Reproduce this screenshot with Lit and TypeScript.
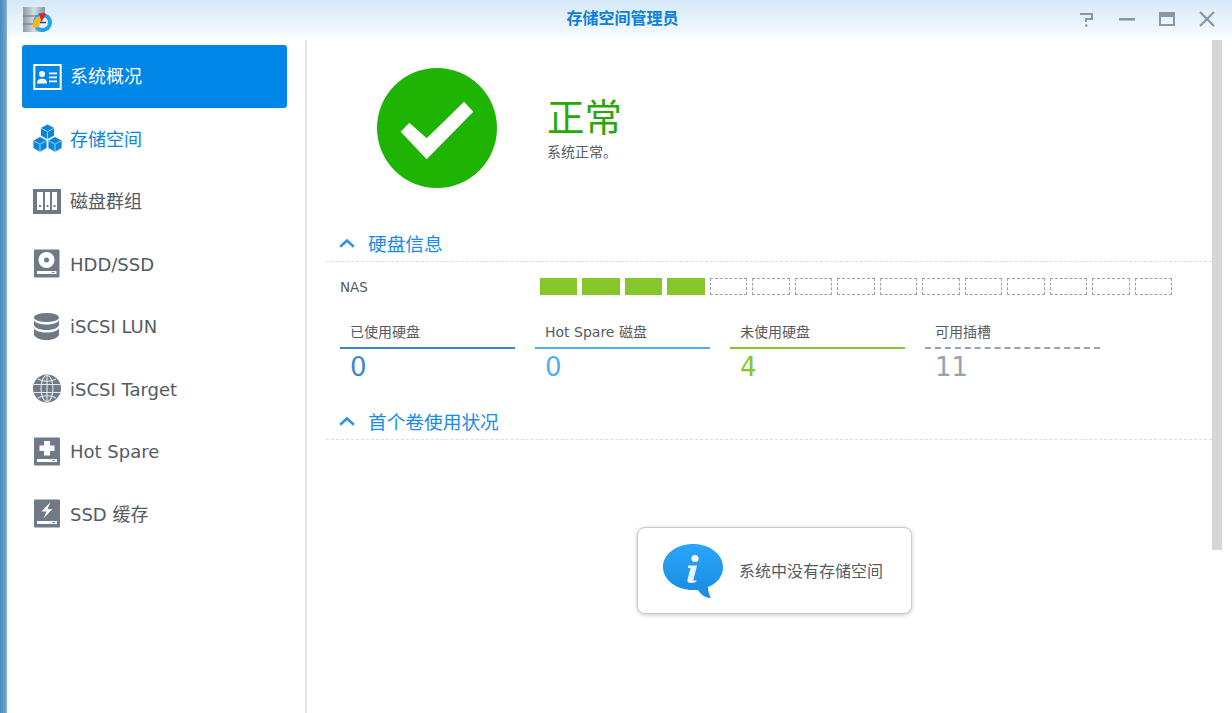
import { LitElement, html, css, svg } from 'lit';
import { customElement } from 'lit/decorators.js';

const GREY = '#6f7a86';
const BLUE = '#0a84e0';

const cube = (x: number, y: number) => svg`
  <path d="M${x} ${y}l6.600 3.600v7.400l-6.600 3.700-6.600-3.700v-7.400z" fill=${BLUE}/>
  <path d="M${x - 6.6} ${y + 3.6}l6.600 3.600 6.600-3.600M${x} ${y + 7.2}v7.500" fill="none" stroke="#9fd0f5" stroke-width="1"/>`;

const icons: Record<string, unknown> = {
  overview: svg`
    <rect x="2.300" y="3" width="26.400" height="24" fill="#0086e6" stroke="#fff" stroke-width="2"/>
    <circle cx="10" cy="12" r="3" fill="#fff"/>
    <path d="M5 21.500c0-3.400 2.200-4.800 5-4.800s5 1.400 5 4.800z" fill="#fff"/>
    <path d="M17 10.500h8v1.800h-8zM17 14.500h8v1.800h-8zM17 18.500h8v1.800h-8z" fill="#fff"/>`,
  storage: svg`${cube(15.5, 0.5)}${cube(8, 13)}${cube(23, 13)}`,
  volume: svg`
    <rect x="1" y="2" width="28" height="25" fill=${GREY}/>
    <path d="M5 5h6v18H5zM13 5h5v18h-5zM20 5h5v18h-5z" fill="#fff"/>
    <path d="M7 18h2v2H7zM14.500 18h2v2h-2zM21.500 18h2v2h-2z" fill=${GREY}/>`,
  hdd: svg`
    <rect x="2" y="0.500" width="25.500" height="28" rx="1" fill=${GREY}/>
    <circle cx="14.500" cy="11" r="8" fill="#fff"/>
    <circle cx="14.500" cy="11" r="2.500" fill=${GREY}/>
    <rect x="5" y="22" width="19.500" height="3" fill="#fff"/>
    <rect x="20" y="23" width="2.500" height="1" fill=${GREY}/>`,
  lun: svg`
    <ellipse cx="14.500" cy="5.500" rx="12.500" ry="4.500" fill=${GREY}/>
    <path d="M2 8.500c2 2.800 6.500 4 12.500 4s10.500-1.200 12.500-4v5c-2 3-6.500 4.500-12.500 4.500S4 16.500 2 13.500z" fill=${GREY}/>
    <path d="M2 16.500c2 2.800 6.500 4 12.500 4s10.500-1.200 12.500-4v6.500c-1.500 3-6.500 5-12.500 5S3.500 26 2 23z" fill=${GREY}/>`,
  target: svg`
    <circle cx="15" cy="14.500" r="14" fill=${GREY}/>
    <g fill="none" stroke="#e4e7ea" stroke-width="1.100">
      <ellipse cx="15" cy="14.500" rx="6" ry="13"/>
      <path d="M15 1.500v26M2 10.500h26M2 18.500h26"/>
      <path d="M6 5c5 3 13 3 18 0M6 24c5-3 13-3 18 0"/>
    </g>`,
  spare: svg`
    <rect x="2" y="0.500" width="26" height="28" rx="1" fill=${GREY}/>
    <path d="M12 4h6v4.500h4.500v5.500H18v4.500h-6V14H7.500V8.500H12z" fill="#fff"/>
    <rect x="5" y="22" width="20" height="3" fill="#fff"/>
    <rect x="20.500" y="23" width="2.500" height="1" fill=${GREY}/>`,
  ssd: svg`
    <rect x="2" y="0.500" width="26" height="28" rx="1" fill=${GREY}/>
    <path d="M18.500 3 9.500 12.500h5l-3 7 9-9.500h-5l3-7z" fill="#fff"/>
    <rect x="5" y="22" width="20" height="3" fill="#fff"/>
    <rect x="20.500" y="23" width="2.500" height="1" fill=${GREY}/>`,
};

const menu = [
  { icon: 'overview', label: '系统概况', cls: 'active' },
  { icon: 'storage', label: '存储空间', cls: 'link' },
  { icon: 'volume', label: '磁盘群组', cls: '' },
  { icon: 'hdd', label: 'HDD/SSD', cls: '' },
  { icon: 'lun', label: 'iSCSI LUN', cls: '' },
  { icon: 'target', label: 'iSCSI Target', cls: '' },
  { icon: 'spare', label: 'Hot Spare', cls: '' },
  { icon: 'ssd', label: 'SSD 缓存', cls: '' },
];

const stats = [
  { label: '已使用硬盘', value: '0', cls: 'used' },
  { label: 'Hot Spare 磁盘', value: '0', cls: 'spare' },
  { label: '未使用硬盘', value: '4', cls: 'free' },
  { label: '可用插槽', value: '11', cls: 'slot' },
];

const slots = Array.from({ length: 15 }, (_, i) => i < 4);

const chevron = html`<svg class="chevron" width="16" height="10" viewBox="0 0 16 10">
  <path d="M1.200 8.800 8 2.500l6.800 6.300" fill="none" stroke="#2b95e6" stroke-width="2.600"/>
</svg>`;

@customElement('app-root')
export class AppRoot extends LitElement {
  static styles = css`
    :host {
      display: flex;
      width: 1232px;
      height: 713px;
      overflow: hidden;
      background: #fff;
      font-family: 'DejaVu Sans', 'Noto Sans CJK SC', sans-serif;
      color: #555b63;
    }

    .edge {
      width: 7px;
      flex: none;
      background: linear-gradient(90deg, #4a8ab8, #6aa5cf 80%, #8fbcdc);
    }

    .window {
      flex: 1;
      display: flex;
      flex-direction: column;
      min-width: 0;
    }

    .titlebar {
      height: 40px;
      flex: none;
      display: grid;
      grid-template-columns: 1fr auto 1fr;
      align-items: center;
      background: linear-gradient(180deg, #d5e8f8, #f2f8fd 80%, #fff);
    }

    .logo {
      margin: -1px 0 0 15px;
      display: block;
    }

    .title {
      font-size: 16px;
      line-height: 20px;
      font-weight: 700;
      color: #0a80dc;
      padding: 0 0 3px 6px;
    }

    .controls {
      display: flex;
      justify-content: flex-end;
      gap: 24px;
      padding: 0 17px 2px 0;
    }

    .body {
      flex: 1;
      display: flex;
      min-height: 0;
    }

    .sidebar {
      width: 300px;
      flex: none;
      box-sizing: border-box;
      padding: 5px 18px 0 15px;
      border-right: 2px solid #e6e7e8;
    }

    .item {
      height: 62.5px;
      display: flex;
      align-items: center;
      gap: 8px;
      padding-left: 10px;
      border-radius: 3px;
      font-size: 18px;
      line-height: 24px;
    }

    .item span {
      padding-top: 2px;
    }

    .item svg {
      flex: none;
    }

    .item.active {
      background: #0086e6;
      color: #fff;
    }

    .item.link {
      color: #0a84e0;
    }

    .main {
      position: relative;
      flex: 1;
      min-width: 0;
      padding: 0 10px 0 19px;
    }

    .scrollbar {
      position: absolute;
      top: 0;
      right: 10px;
      width: 10px;
      height: 510px;
      background: #d5d6d8;
    }

    .status {
      display: flex;
      align-items: flex-start;
      gap: 50px;
      padding: 28px 0 0 51px;
      height: 120px;
    }

    .status-text {
      padding-top: 26px;
    }

    .status-title {
      font-size: 37.5px;
      line-height: 48px;
      color: #28a806;
    }

    .status-desc {
      font-size: 14px;
      line-height: 20px;
    }

    .head {
      box-sizing: border-box;
      height: 37px;
      display: flex;
      align-items: center;
      gap: 13px;
      padding-left: 13px;
      border-bottom: 1px dashed #d3deea;
      font-size: 18.7px;
      color: #1a8ae6;
    }

    .head span {
      position: relative;
      top: -1px;
    }

    .disk {
      margin-top: 37px;
    }

    .nas {
      display: flex;
      align-items: center;
      margin-top: 16px;
      padding-left: 14px;
      font-size: 13.5px;
    }

    .nas-label {
      width: 200px;
      flex: none;
    }

    .slots {
      width: 632px;
      display: grid;
      grid-template-columns: repeat(15, 1fr);
      gap: 5px;
    }

    .bay {
      box-sizing: border-box;
      height: 17px;
      border: 1px dashed #9aa2ad;
    }

    .bay.on {
      background: #85c62a;
      border: none;
    }

    .stats {
      display: flex;
      gap: 20px;
      margin-top: 27px;
      padding-left: 14px;
    }

    .stat {
      width: 175px;
    }

    .stat-label {
      box-sizing: border-box;
      height: 27px;
      line-height: 20px;
      padding-left: 10px;
      font-size: 14px;
      border-bottom: 2px solid;
    }

    .stat-value {
      padding-left: 10px;
      font-size: 26px;
      line-height: 36px;
    }

    .used .stat-label { border-color: #3f87cc; }
    .used .stat-value { color: #3f87cc; }
    .spare .stat-label { border-color: #4fb0f0; }
    .spare .stat-value { color: #4fb0f0; }
    .free .stat-label { border-color: #85c62a; }
    .free .stat-value { color: #85c62a; }
    .slot .stat-label { border-bottom: 2px dashed #9aa2ad; }
    .slot .stat-value { color: #97a3b3; }

    .usage {
      margin-top: 18px;
    }

    .notice {
      box-sizing: border-box;
      width: 275px;
      height: 87px;
      margin: 87px 0 0 311px;
      display: flex;
      align-items: center;
      gap: 16px;
      padding-left: 25px;
      background: #fff;
      border: 1px solid #c6cbd1;
      border-radius: 8px;
      box-shadow: 0 1px 4px rgba(0, 0, 0, 0.22);
      font-size: 16px;
    }

    .notice span {
      position: relative;
      top: -1px;
    }
  `;

  render() {
    return html`
      <div class="edge"></div>
      <div class="window">
        <div class="titlebar">
          <svg class="logo" width="31" height="29" viewBox="0 0 31 29">
            <defs>
              <linearGradient id="can" x1="0" y1="0" x2="1" y2="0">
                <stop offset="0" stop-color="#8e9aa6"/>
                <stop offset="0.5" stop-color="#d3dbe2"/>
                <stop offset="1" stop-color="#8593a0"/>
              </linearGradient>
            </defs>
            <rect x="1" y="2" width="22" height="25" fill="url(#can)"/>
            <path d="M1 11h22M1 19h22" stroke="#66727e" stroke-width="1"/>
            <circle cx="20.500" cy="17.500" r="9.500" fill="#1ea4f6"/>
            <circle cx="20.500" cy="17.500" r="5.500" fill="#e8f3fb"/>
            <path d="M10.500 22c0-6 3-10 7-11l2 6-4 6z" fill="#f5b81c"/>
            <path d="M17 8.500l6-.5 .5 2-4 7z" fill="#e0202c"/>
            <path d="M18 17.500h6" stroke="#33506b" stroke-width="1.500"/>
          </svg>
          <div class="title">存储空间管理员</div>
          <div class="controls">
            <svg width="16" height="16" viewBox="0 0 16 16" fill="none" stroke="#8a97a3" stroke-width="2">
              <path d="M1 3h12v5H7v3"/><path d="M6 13.500h2.500v2H6z" fill="#8a97a3" stroke="none"/>
            </svg>
            <svg width="16" height="16" viewBox="0 0 16 16"><rect y="7" width="16" height="2.500" fill="#8a97a3"/></svg>
            <svg width="16" height="16" viewBox="0 0 16 16">
              <path d="M0 1h16v14H0zM2 6v7h12V6z" fill="#8a97a3" fill-rule="evenodd"/>
            </svg>
            <svg width="16" height="16" viewBox="0 0 16 16">
              <path d="M1 1l14 14M15 1 1 15" stroke="#8a97a3" stroke-width="2.200"/>
            </svg>
          </div>
        </div>
        <div class="body">
          <nav class="sidebar">
            ${menu.map(
              m => html`
                <div class="item ${m.cls}">
                  <svg width="30" height="29" viewBox="0 0 30 29">${icons[m.icon]}</svg>
                  <span>${m.label}</span>
                </div>
              `
            )}
          </nav>
          <main class="main">
            <div class="scrollbar"></div>
            <div class="status">
              <svg width="120" height="120" viewBox="0 0 120 120">
                <circle cx="60" cy="60" r="60" fill="#1fb404"/>
                <polygon points="23.700,63.700 49.700,91.300 96.300,43.700 87,33.700 49.700,70.300 32.300,54.700" fill="#fff"/>
              </svg>
              <div class="status-text">
                <div class="status-title">正常</div>
                <div class="status-desc">系统正常。</div>
              </div>
            </div>
            <div class="head disk">${chevron}<span>硬盘信息</span></div>
            <div class="nas">
              <div class="nas-label">NAS</div>
              <div class="slots">
                ${slots.map(on => html`<div class="bay ${on ? 'on' : ''}"></div>`)}
              </div>
            </div>
            <div class="stats">
              ${stats.map(
                s => html`
                  <div class="stat ${s.cls}">
                    <div class="stat-label">${s.label}</div>
                    <div class="stat-value">${s.value}</div>
                  </div>
                `
              )}
            </div>
            <div class="head usage">${chevron}<span>首个卷使用状况</span></div>
            <div class="notice">
              <svg width="60" height="54" viewBox="0 0 60 54">
                <defs>
                  <linearGradient id="bubble" x1="0" y1="0" x2="0" y2="1">
                    <stop offset="0" stop-color="#2ba6fa"/>
                    <stop offset="1" stop-color="#1a8ae0"/>
                  </linearGradient>
                </defs>
                <path d="M30 0c16.500 0 30 10 30 23 0 10-7 17-15 20 0 4 1 8 3 11-5 0-10-3-13-8-1 0-3 0-5 0C13.500 46 0 36 0 23S13.500 0 30 0z" fill="url(#bubble)"/>
                <circle cx="32" cy="14.500" r="3.500" fill="#fff"/>
                <path d="M25 21.500h9l-3.500 14c-.3 1.500 1 1.500 3 .5l-.5 2c-4 1.500-9.500 1.500-8.500-2.500l3-11.500h-2.500z" fill="#e8f4fd"/>
              </svg>
              <span>系统中没有存储空间</span>
            </div>
          </main>
        </div>
      </div>
    `;
  }
}

declare global {
  interface HTMLElementTagNameMap {
    'app-root': AppRoot;
  }
}
